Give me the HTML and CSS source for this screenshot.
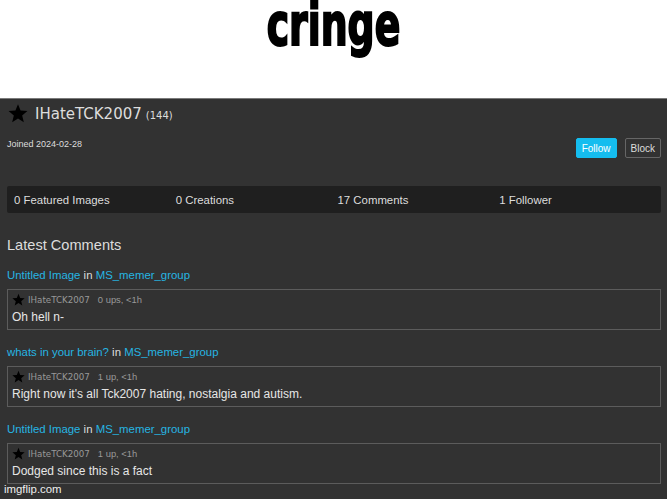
FILE: index.html
```html
<!DOCTYPE html>
<html lang="en">
<head>
    <meta charset="UTF-8">
    <title>cringe</title>
    <link rel="stylesheet" href="styles.css">
</head>
<body>
    <div class="meme-top">
        <h1 class="caption">cringe</h1>
    </div>

    <div class="profile">
        <div class="user-head">
            <svg class="star big" viewBox="0 0 24 24"><path d="M12 1.5l3.1 7.6 8.2.6-6.3 5.3 2 8-7-4.4-7 4.4 2-8L.7 9.7l8.2-.6z"/></svg>
            <span class="username">IHateTCK2007</span>
            <span class="points">(144)</span>
        </div>

        <div class="joined-row">
            <span class="joined">Joined 2024-02-28</span>
            <div class="actions">
                <button class="btn follow">Follow</button>
                <button class="btn block">Block</button>
            </div>
        </div>

        <div class="stats">
            <span>0 Featured Images</span>
            <span>0 Creations</span>
            <span>17 Comments</span>
            <span>1 Follower</span>
        </div>

        <h2 class="section-title">Latest Comments</h2>

        <div class="com-item">
            <div class="com-where"><a href="#">Untitled Image</a> in <a href="#">MS_memer_group</a></div>
            <div class="com-box">
                <div class="com-meta">
                    <svg class="star small" viewBox="0 0 24 24"><path d="M12 1.5l3.1 7.6 8.2.6-6.3 5.3 2 8-7-4.4-7 4.4 2-8L.7 9.7l8.2-.6z"/></svg>
                    <span class="com-user">IHateTCK2007</span>
                    <span class="com-ups">0 ups, &lt;1h</span>
                </div>
                <div class="com-text">Oh hell n-</div>
            </div>
        </div>

        <div class="com-item">
            <div class="com-where"><a href="#">whats in your brain?</a> in <a href="#">MS_memer_group</a></div>
            <div class="com-box">
                <div class="com-meta">
                    <svg class="star small" viewBox="0 0 24 24"><path d="M12 1.5l3.1 7.6 8.2.6-6.3 5.3 2 8-7-4.4-7 4.4 2-8L.7 9.7l8.2-.6z"/></svg>
                    <span class="com-user">IHateTCK2007</span>
                    <span class="com-ups">1 up, &lt;1h</span>
                </div>
                <div class="com-text">Right now it's all Tck2007 hating, nostalgia and autism.</div>
            </div>
        </div>

        <div class="com-item">
            <div class="com-where"><a href="#">Untitled Image</a> in <a href="#">MS_memer_group</a></div>
            <div class="com-box">
                <div class="com-meta">
                    <svg class="star small" viewBox="0 0 24 24"><path d="M12 1.5l3.1 7.6 8.2.6-6.3 5.3 2 8-7-4.4-7 4.4 2-8L.7 9.7l8.2-.6z"/></svg>
                    <span class="com-user">IHateTCK2007</span>
                    <span class="com-ups">1 up, &lt;1h</span>
                </div>
                <div class="com-text">Dodged since this is a fact</div>
            </div>
        </div>

        <div class="watermark">imgflip.com</div>
    </div>
</body>
</html>
```

FILE: styles.css
```css
body { margin: 0; width: 667px; height: 499px; overflow: hidden; background: #fff; font-family: "Liberation Sans", Arial, sans-serif; }

.meme-top { height: 98px; text-align: center; }
.caption { margin: 0; font-family: "DejaVu Sans Condensed", "DejaVu Sans", sans-serif; font-weight: bold; font-size: 42px; line-height: 35px; color: #000; -webkit-text-stroke: 1.5px #000; display: inline-block; transform: scaleY(1.4); transform-origin: 50% 0; }

.profile { position: relative; height: 400px; background: #323232; border-top: 1px solid #7a7a7a; padding: 0 6px 0 7px; color: #ddd; }

.user-head { display: flex; align-items: baseline; height: 30px; padding-top: 6px; }
.star { fill: #000; }
.star.big { width: 20px; height: 20px; margin: -2px 7px 0 1px; align-self: flex-start; }
.username { font-family: "DejaVu Sans", sans-serif; font-size: 15px; color: #ddd; }
.points { font-family: "DejaVu Sans", sans-serif; font-size: 10px; margin-left: 4px; color: #ddd; }

.joined-row { display: flex; justify-content: space-between; align-items: flex-start; height: 51px; }
.joined { font-size: 9px; margin-top: 4px; color: #ddd; }
.actions { display: flex; gap: 8px; margin-top: 3px; }
.btn { font-family: "Liberation Sans", Arial, sans-serif; font-size: 10px; height: 20px; padding: 0 5px; border-radius: 2px; cursor: pointer; }
.follow { background: #15bdef; border: 1px solid #15bdef; color: #fff; }
.block { background: transparent; border: 1px solid #666; color: #ddd; }

.stats { display: grid; grid-template-columns: repeat(4, 1fr); background: #1f1f1f; border-radius: 2px; height: 27px; align-items: center; padding-left: 7px; font-size: 11.4px; color: #ddd; }

.section-title { margin: 23px 0 0; font-weight: normal; font-size: 14.6px; line-height: 18px; color: #ddd; }

.com-item { margin-top: 14px; }
.com-item + .com-item { margin-top: 15px; }
.com-where { font-size: 11.4px; line-height: 14px; color: #ddd; }
.com-where a { color: #26b5e3; text-decoration: none; }
.com-box { margin-top: 7px; height: 39px; border: 1px solid #5c5c5c; padding: 0 3px; }
.com-meta { display: flex; align-items: center; height: 19px; }
.star.small { width: 13px; height: 13px; margin-left: 1px; margin-right: 3px; }
.com-user { font-family: "DejaVu Sans", sans-serif; font-size: 8.7px; color: #999; }
.com-ups { font-size: 9.4px; color: #999; margin-left: 8px; }
.com-text { font-size: 12px; line-height: 17px; color: #e6e6e6; padding-left: 1px; }

.watermark { position: absolute; left: 4px; top: 384px; font-size: 11.4px; color: #eee; }
```
